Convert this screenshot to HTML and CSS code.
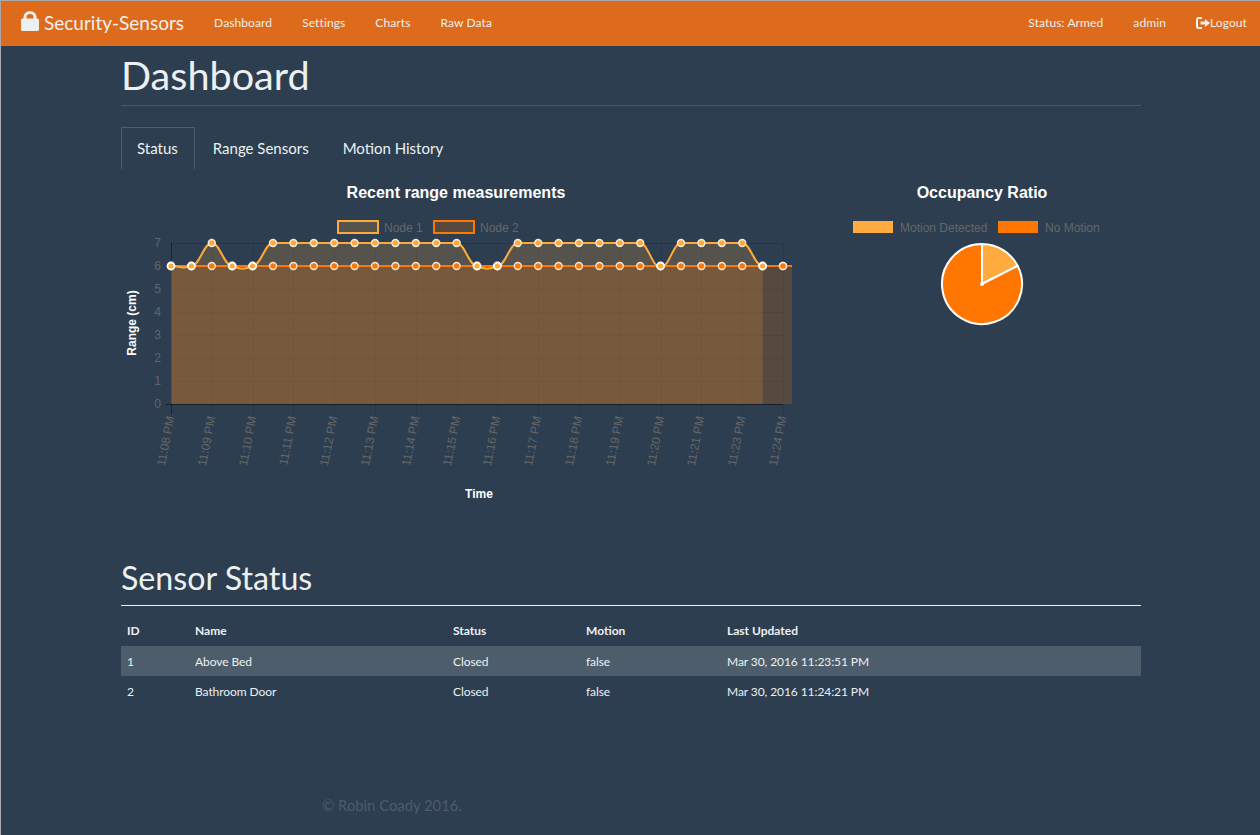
FILE: index.html
```html
<!DOCTYPE html>
<html lang="en">
<head>
    <meta charset="UTF-8">
    <title>Security-Sensors</title>
    <link rel="stylesheet" href="styles.css">
</head>
<body>
    <nav class="navbar">
        <a class="brand" href="#">
            <svg class="brand-icon" width="18" height="20" viewBox="0 0 18 20">
                <path d="M2.5 8V6a6.5 6 0 0 1 13 0v2h-3V6a3.5 3 0 0 0-7 0v2z" fill="#ecf0f1"/>
                <rect x="0" y="7.5" width="18" height="12.5" rx="1.5" fill="#ecf0f1"/>
            </svg>
            Security-Sensors
        </a>
        <ul class="nav-links">
            <li><a href="#">Dashboard</a></li>
            <li><a href="#">Settings</a></li>
            <li><a href="#">Charts</a></li>
            <li><a href="#">Raw Data</a></li>
        </ul>
        <ul class="nav-links nav-right">
            <li><a href="#">Status: Armed</a></li>
            <li><a href="#">admin</a></li>
            <li><a href="#">
                <svg class="logout-icon" width="14" height="12" viewBox="0 0 14 12">
                    <path d="M6 1H2.5A1.5 1.5 0 0 0 1 2.5v7A1.5 1.5 0 0 0 2.5 11H6" fill="none" stroke="#ecf0f1" stroke-width="2"/>
                    <path d="M4.5 4.5H9V2l5 4-5 4V7.5H4.5z" fill="#ecf0f1"/>
                </svg>Logout</a></li>
        </ul>
    </nav>

    <div class="container">
        <h1 class="page-title">Dashboard</h1>

        <ul class="tabs">
            <li class="active"><a href="#">Status</a></li>
            <li><a href="#">Range Sensors</a></li>
            <li><a href="#">Motion History</a></li>
        </ul>

        <div class="charts">
            <svg id="range-chart" class="chart" width="691" height="350"></svg>
            <svg id="pie-chart" class="chart" width="329" height="350"></svg>
        </div>

        <h2 class="section-title">Sensor Status</h2>
        <table class="sensors">
            <thead>
                <tr>
                    <th class="col-id">ID</th>
                    <th class="col-name">Name</th>
                    <th class="col-status">Status</th>
                    <th class="col-motion">Motion</th>
                    <th>Last Updated</th>
                </tr>
            </thead>
            <tbody>
                <tr>
                    <td>1</td>
                    <td>Above Bed</td>
                    <td>Closed</td>
                    <td>false</td>
                    <td>Mar 30, 2016 11:23:51 PM</td>
                </tr>
                <tr>
                    <td>2</td>
                    <td>Bathroom Door</td>
                    <td>Closed</td>
                    <td>false</td>
                    <td>Mar 30, 2016 11:24:21 PM</td>
                </tr>
            </tbody>
        </table>

        <footer class="footer">© Robin Coady 2016.</footer>
    </div>

    <script src="charts.js"></script>
</body>
</html>
```

FILE: styles.css
```css
html, body {
    height: 100%;
}
body {
    margin: 0;
    box-sizing: border-box;
    border-top: 1px solid #a9a9a9;
    border-left: 1px solid #a9a9a9;
    background-color: #2c3e50;
    color: #ecf0f1;
    font-family: Lato, "Liberation Sans", sans-serif;
    font-size: 12px;
}
a {
    color: inherit;
    text-decoration: none;
}
ul {
    list-style: none;
    margin: 0;
    padding: 0;
}
.navbar {
    display: flex;
    align-items: center;
    height: 45px;
    padding: 0 13px 0 20px;
    background-color: #dd6b1b;
}
.brand {
    display: flex;
    align-items: center;
    gap: 5px;
    margin-top: -2px;
    font-size: 19px;
}
.brand-icon {
    margin-top: -3px;
}
.nav-links {
    display: flex;
    gap: 30px;
    margin-left: 30px;
    margin-top: -3px;
    letter-spacing: 0.1px;
}
.nav-right {
    margin-left: auto;
}
.logout-icon {
    vertical-align: -2px;
}
.container {
    width: 1020px;
    margin-left: 120px;
}
.page-title {
    margin: 7px 0 0;
    padding: 0 0 9px;
    border-bottom: 1px solid #46586a;
    font-size: 39.6px;
    font-weight: 400;
    line-height: 43px;
}
.tabs {
    display: flex;
    margin-top: 21px;
    font-size: 15px;
}
.tabs a {
    display: block;
    padding: 11px 15px 12px;
    height: 18px;
    line-height: 18px;
    border: 1px solid transparent;
    border-bottom: 0;
}
.tabs li {
    margin-right: 2px;
}
.tabs .active a {
    padding-right: 16px;
    border-color: #4d5d6d;
}
.charts {
    display: flex;
    margin-top: 1px;
}
.chart {
    display: block;
}
.chart text {
    font-family: "Liberation Sans", Arial, sans-serif;
}
.section-title {
    margin: 40px 0 0;
    padding-bottom: 10px;
    border-bottom: 1px solid #ecf0f1;
    font-size: 32.2px;
    font-weight: 400;
    line-height: 35px;
}
.sensors {
    width: 100%;
    margin-top: 10px;
    border-collapse: collapse;
}
.sensors th, .sensors td {
    height: 30px;
    padding: 0 6px;
    box-sizing: border-box;
    text-align: left;
}
.sensors th {
    padding-bottom: 2px;
    font-weight: 700;
}
.sensors td {
    letter-spacing: -0.08px;
}
.sensors tbody tr:nth-child(odd) {
    background-color: #4d5d6c;
}
.col-id {
    width: 68px;
}
.col-name {
    width: 258px;
}
.col-status {
    width: 133px;
}
.col-motion {
    width: 141px;
}
.footer {
    margin: 90px 0 0 201px;
    color: #4b5c6d;
    font-size: 14.8px;
    line-height: 18px;
}
```

FILE: charts.js
```js
const SVG_NS = 'http://www.w3.org/2000/svg';

function el(parent, name, attrs, text) {
    const node = document.createElementNS(SVG_NS, name);
    for (const key in attrs) {
        node.setAttribute(key, attrs[key]);
    }
    if (text) node.textContent = text;
    parent.appendChild(node);
    return node;
}

// offsets of each svg from the page, so numbers below are page coordinates
function drawRange() {
    const svg = document.getElementById('range-chart');
    const g = el(svg, 'g', { transform: 'translate(-121 -170)' });

    const left = 171, right = 783, end = 792;
    const zero = 404, unit = 23;
    const step = (right - left) / 30;
    const xs = i => left + step * i;
    const ys = v => zero - v * unit;

    const node1 = [6,6,7,6,6,7,7,7,7,7,7,7,7,7,7,6,6,7,7,7,7,7,7,7,6,7,7,7,7,6];
    const node2 = new Array(31).fill(6);
    const labels = ['11:08','11:09','11:10','11:11','11:12','11:13','11:14','11:15',
        '11:16','11:17','11:18','11:19','11:20','11:21','11:23','11:24'];

    el(g, 'text', { x: 456, y: 198, 'text-anchor': 'middle', 'font-size': 16, 'font-weight': 700, fill: '#fff' }, 'Recent range measurements');

    // legend
    el(g, 'rect', { x: 338, y: 221, width: 40, height: 12, fill: 'rgba(255,171,64,0.2)', stroke: '#ffa93a', 'stroke-width': 2 });
    el(g, 'text', { x: 384, y: 232, 'font-size': 12, fill: '#666' }, 'Node 1');
    el(g, 'rect', { x: 434, y: 221, width: 40, height: 12, fill: 'rgba(255,118,0,0.2)', stroke: '#ff7600', 'stroke-width': 2 });
    el(g, 'text', { x: 480, y: 232, 'font-size': 12, fill: '#666' }, 'Node 2');

    // y axis
    for (let v = 0; v <= 7; v++) {
        el(g, 'line', { x1: v === 0 ? 166 : 171, x2: right, y1: ys(v) + 0.5, y2: ys(v) + 0.5,
            stroke: v === 0 ? 'rgba(0,0,0,0.5)' : 'rgba(0,0,0,0.1)' });
        el(g, 'text', { x: 161, y: ys(v) + 4, 'text-anchor': 'end', 'font-size': 12, fill: '#666' }, String(v));
    }
    el(g, 'text', { transform: 'translate(136 323) rotate(-90)', 'text-anchor': 'middle', 'font-size': 12, 'font-weight': 700, fill: '#fff' }, 'Range (cm)');

    // x axis
    labels.forEach((label, n) => {
        const i = n * 2;
        const x = Math.round(xs(i)) + 0.5;
        el(g, 'line', { x1: x, x2: x, y1: 243, y2: 414, stroke: n === 0 ? 'rgba(0,0,0,0.4)' : 'rgba(0,0,0,0.1)' });
        el(g, 'text', { transform: `translate(${x + 3} 417) rotate(-79)`, 'text-anchor': 'end', 'font-size': 12, fill: '#666' }, label + ' PM');
    });
    el(g, 'text', { x: 479, y: 498, 'text-anchor': 'middle', 'font-size': 12, 'font-weight': 700, fill: '#fff' }, 'Time');

    // node 1 line with small curve overshoot, like the chart's bezier tension
    let d = `M${xs(0)} ${ys(node1[0])}`;
    for (let i = 1; i < node1.length; i++) {
        const gap = step * 0.4;
        d += ` C${xs(i - 1) + gap} ${ys(node1[i - 1]) + (i > 1 && node1[i - 2] > node1[i - 1] ? 3.5 : 0)} ${xs(i) - gap} ${ys(node1[i]) + (node1[i + 1] > node1[i] ? 3.5 : 0)} ${xs(i)} ${ys(node1[i])}`;
    }
    const n1end = xs(node1.length - 1);
    el(g, 'path', { d: `${d} L${n1end} ${zero} L${left} ${zero}Z`, fill: 'rgba(255,171,64,0.2)' });
    el(g, 'rect', { x: left, y: ys(6), width: end - left, height: zero - ys(6), fill: 'rgba(255,118,0,0.2)' });
    el(g, 'line', { x1: left, x2: end, y1: ys(6), y2: ys(6), stroke: '#ff7600', 'stroke-width': 2 });
    el(g, 'path', { d: d, fill: 'none', stroke: '#ffa93a', 'stroke-width': 2 });

    node1.forEach((v, i) => {
        el(g, 'circle', { cx: xs(i), cy: ys(v), r: 3.5, fill: '#ffa93a', stroke: 'rgba(255,255,255,0.85)', 'stroke-width': 1.4 });
    });
    node2.forEach((v, i) => {
        if (node1[i] !== v) {
            el(g, 'circle', { cx: xs(i), cy: ys(v), r: 3.5, fill: '#ff7600', stroke: 'rgba(255,255,255,0.85)', 'stroke-width': 1.4 });
        }
    });
    // points where both series sit on top of each other read as white rings
    node1.forEach((v, i) => {
        if (v === node2[i]) {
            el(g, 'circle', { cx: xs(i), cy: ys(v), r: 3.5, fill: '#ffa93a', stroke: '#fff', 'stroke-width': 1.8 });
        }
    });
    el(g, 'circle', { cx: xs(30), cy: ys(6), r: 3.5, fill: '#ff7600', stroke: 'rgba(255,255,255,0.85)', 'stroke-width': 1.4 });
}

function drawPie() {
    const svg = document.getElementById('pie-chart');
    const g = el(svg, 'g', { transform: 'translate(-812 -170)' });
    const cx = 982, cy = 284, r = 40;
    const a = 63 * Math.PI / 180;
    const ex = cx + r * Math.sin(a), ey = cy - r * Math.cos(a);

    el(g, 'text', { x: cx, y: 198, 'text-anchor': 'middle', 'font-size': 16, 'font-weight': 700, fill: '#fff' }, 'Occupancy Ratio');

    el(g, 'rect', { x: 853, y: 221, width: 40, height: 12, fill: '#ffab40' });
    el(g, 'text', { x: 900, y: 232, 'font-size': 12, fill: '#666' }, 'Motion Detected');
    el(g, 'rect', { x: 998, y: 221, width: 40, height: 12, fill: '#ff7600' });
    el(g, 'text', { x: 1045, y: 232, 'font-size': 12, fill: '#666' }, 'No Motion');

    const white = { stroke: '#fff', 'stroke-width': 2, 'stroke-linejoin': 'round' };
    el(g, 'path', Object.assign({ d: `M${cx} ${cy}L${cx} ${cy - r}A${r} ${r} 0 0 1 ${ex} ${ey}Z`, fill: '#ffab40' }, white));
    el(g, 'path', Object.assign({ d: `M${cx} ${cy}L${ex} ${ey}A${r} ${r} 0 1 1 ${cx} ${cy - r}Z`, fill: '#ff7600' }, white));
    el(g, 'circle', { cx: cx, cy: cy, r: 2, fill: '#fff' });
}

drawRange();
drawPie();
```
